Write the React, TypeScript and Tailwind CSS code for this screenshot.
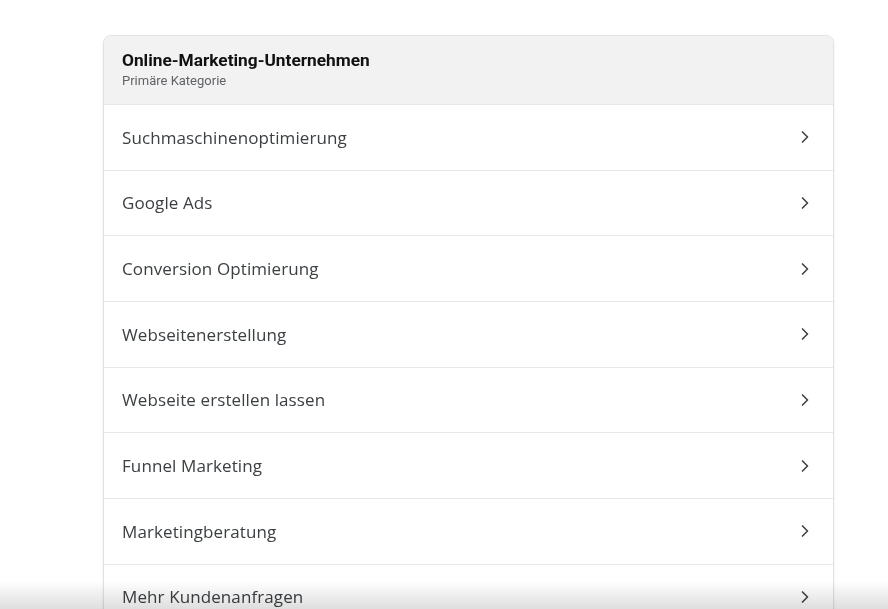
import { ChevronRight } from "lucide-react";

const items = [
  "Suchmaschinenoptimierung",
  "Google Ads",
  "Conversion Optimierung",
  "Webseitenerstellung",
  "Webseite erstellen lassen",
  "Funnel Marketing",
  "Marketingberatung",
  "Mehr Kundenanfragen",
];

export default function App() {
  return (
    <div className="relative h-[609px] w-[888px] overflow-hidden bg-white font-['Roboto',sans-serif]">
      <div className="ml-[103px] mt-[35px] w-[731px] overflow-hidden rounded-t-lg border border-[#e3e3e3] bg-white shadow-[0_1px_3px_rgba(0,0,0,0.08)]">
        <div className="h-[68px] bg-[#f2f2f2] pl-[18px] pr-[19px] pt-[14px]">
          <div className="text-[17.3px] font-bold leading-5 text-[#111]">Online-Marketing-Unternehmen</div>
          <div className="mt-[3px] text-[13px] leading-4 text-[#5f6368]">Primäre Kategorie</div>
        </div>
        {items.map((item) => (
          <div
            key={item}
            className="flex h-[65.7px] items-center justify-between border-t border-[#e8e8e8] pl-[18px] pr-[18px] first:border-t-0"
          >
            <span className="font-['Open_Sans',sans-serif] text-[17px] tracking-[0.1px] text-[#3c4043]">{item}</span>
            <ChevronRight className="h-[20px] w-[20px] text-[#444]" strokeWidth={2} />
          </div>
        ))}
      </div>
      <div className="pointer-events-none absolute bottom-0 left-0 h-[28px] w-full bg-gradient-to-b from-white to-[#dedede] mix-blend-multiply" />
    </div>
  );
}
